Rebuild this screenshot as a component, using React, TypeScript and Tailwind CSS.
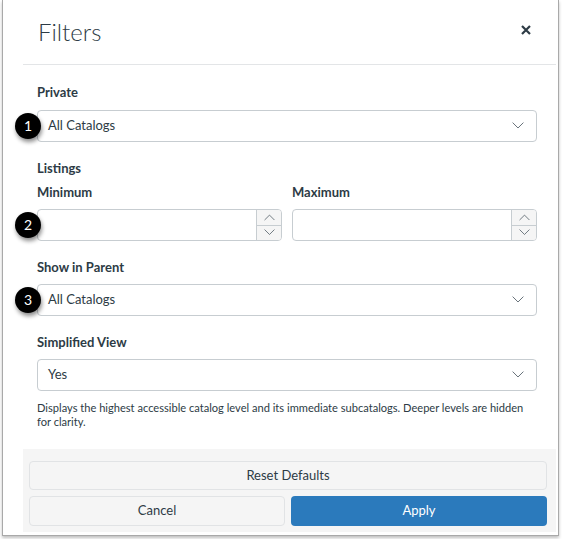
import React from "react";

const font = { fontFamily: "Lato, 'Noto Sans', sans-serif" };

function Chevron({ up = false, size = 12 }: { up?: boolean; size?: number }) {
  return (
    <svg width={size} height={size * 0.6} viewBox="0 0 20 12" fill="none">
      <path
        d={up ? "M1 11 L10 2 L19 11" : "M1 1 L10 10 L19 1"}
        stroke="#4a5660"
        strokeWidth="1.4"
        strokeLinejoin="miter"
      />
    </svg>
  );
}

function Badge({ n }: { n: number }) {
  return (
    <div className="absolute left-[-22px] top-1/2 -translate-y-1/2 w-[26px] h-[26px] rounded-full bg-black text-white text-[14px] leading-none flex items-center justify-center shadow-[1px_3px_4px_rgba(0,0,0,0.45)] z-10">
      {n}
    </div>
  );
}

function Select({ value, badge }: { value: string; badge?: number }) {
  return (
    <div className="relative">
      {badge !== undefined && <Badge n={badge} />}
      <div className="h-[32px] border border-[#c7cdd1] rounded-[4px] bg-white flex items-center justify-between pl-[10px] pr-[12px]">
        <span className="text-[13px] text-[#2d3b45]">{value}</span>
        <Chevron />
      </div>
    </div>
  );
}

function NumberInput({ badge }: { badge?: number }) {
  return (
    <div className="relative">
      {badge !== undefined && <Badge n={badge} />}
      <div className="h-[32px] border border-[#c7cdd1] rounded-[4px] bg-white flex overflow-hidden">
        <div className="flex-1" />
        <div className="w-[25px] border-l border-[#c7cdd1] bg-[#f5f5f5] flex flex-col">
          <div className="flex-1 flex items-center justify-center border-b border-[#c7cdd1]">
            <Chevron up size={11} />
          </div>
          <div className="flex-1 flex items-center justify-center">
            <Chevron size={11} />
          </div>
        </div>
      </div>
    </div>
  );
}

function Label({ children, className = "" }: { children: React.ReactNode; className?: string }) {
  return <div className={`text-[13px] leading-[16px] font-bold text-[#2d3b45] ${className}`}>{children}</div>;
}

export default function App() {
  return (
    <div className="w-[563px] h-[539px] bg-white overflow-hidden" style={font}>
      <div className="ml-[2px] w-[557px] h-[536px] border-x border-b border-[#a9a9a9] shadow-[0_2px_3px_rgba(0,0,0,0.25)] bg-white flex flex-col">
        <div className="ml-[20px] mr-[2px] mb-[3px] flex-1 flex flex-col">
          <div className="h-[65px] shrink-0 border-b border-[#e3e5e7] flex items-center justify-between pl-[15px] pr-[25px]">
            <h1 className="text-[24px] font-light text-[#2d3b45] leading-none">Filters</h1>
            <svg width="10" height="10" viewBox="0 0 10 10" className="mb-[4px]">
              <path d="M1 1 L9 9 M9 1 L1 9" stroke="#2d3b45" strokeWidth="2.2" />
            </svg>
          </div>
          <div className="pl-[14px] pr-[19px] pt-[19px] flex-1">
            <Label className="mb-[10px]">Private</Label>
            <Select value="All Catalogs" badge={1} />

            <Label className="mt-[18px]">Listings</Label>
            <div className="grid grid-cols-2 gap-[10px] mt-[8px]">
              <div>
                <Label className="mb-[9px]">Minimum</Label>
                <NumberInput badge={2} />
              </div>
              <div>
                <Label className="mb-[9px]">Maximum</Label>
                <NumberInput />
              </div>
            </div>

            <Label className="mt-[18px] mb-[9px]">Show in Parent</Label>
            <Select value="All Catalogs" badge={3} />

            <Label className="mt-[18px] mb-[9px]">Simplified View</Label>
            <Select value="Yes" />
            <p className="text-[11.1px] leading-[14px] text-[#2d3b45] mt-[10px]">
              Displays the highest accessible catalog level and its immediate subcatalogs. Deeper levels are hidden
              for clarity.
            </p>
          </div>
          <div className="shrink-0 bg-[#f5f5f5] pl-[6px] pr-[9px] pt-[12px] pb-[6px] flex flex-col gap-[6px]">
            <button className="h-[29px] w-full bg-[#f5f5f5] border border-[#e1e3e5] rounded-[4px] text-[13px] text-[#2d3b45]">
              Reset Defaults
            </button>
            <div className="grid grid-cols-2 gap-[6px]">
              <button className="h-[30px] bg-[#f5f5f5] border border-[#e1e3e5] rounded-[4px] text-[13px] text-[#2d3b45]">
                Cancel
              </button>
              <button className="h-[30px] bg-[#2b7abc] rounded-[4px] text-[13px] text-white">Apply</button>
            </div>
          </div>
        </div>
      </div>
    </div>
  );
}
